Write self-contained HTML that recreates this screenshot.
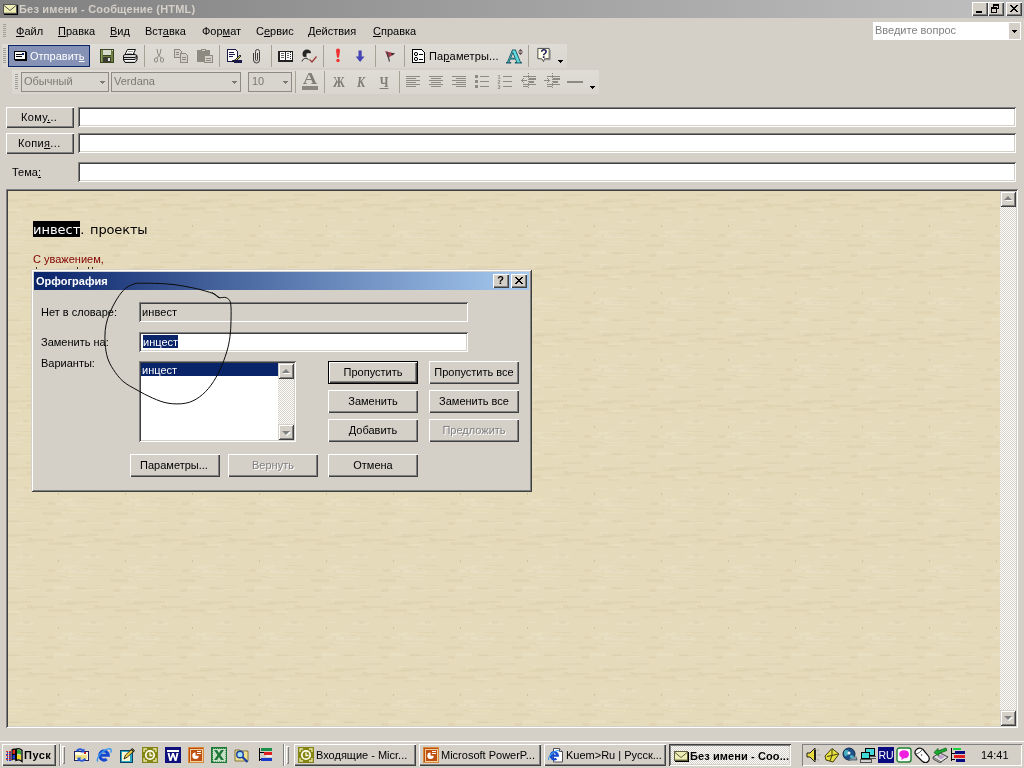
<!DOCTYPE html>
<html lang="ru">
<head>
<meta charset="utf-8">
<title>Без имени - Сообщение (HTML)</title>
<style>
*{box-sizing:border-box;margin:0;padding:0}
html,body{width:1024px;height:768px;overflow:hidden;background:#d4d0c8}
body{position:relative;will-change:transform;font-family:"Liberation Sans","DejaVu Sans",sans-serif;font-size:11px;line-height:13px;color:#000;cursor:default}
.a{position:absolute}
.t{position:absolute;white-space:pre;line-height:13px;height:13px}
u{text-decoration:underline;text-underline-offset:1px}
/* 3D borders */
.btn{position:absolute;background:#d4d0c8;box-shadow:inset 1px 1px 0 #fff,inset -1px -1px 0 #404040,inset -2px -2px 0 #808080;text-align:center;white-space:pre}
.btn.def{box-shadow:inset 0 0 0 1px #000,inset 2px 2px 0 #fff,inset -2px -2px 0 #404040,inset -3px -3px 0 #808080}
.btn.dis{color:#808080;text-shadow:1px 1px 0 #fff}
.sunk{position:absolute;background:#fff;box-shadow:inset 1px 1px 0 #808080,inset -1px -1px 0 #fff,inset 2px 2px 0 #404040,inset -2px -2px 0 #d4d0c8}
.sunk1{position:absolute;box-shadow:inset 1px 1px 0 #808080,inset -1px -1px 0 #fff}
/* title bar */
#title{left:0;top:0;width:1024px;height:18px;background:linear-gradient(90deg,#808080 0%,#c0c0c0 100%)}
#title .cap{left:19px;top:3px;color:#d4d0c8;font-weight:bold;letter-spacing:.2px}
.cb{position:absolute;top:2px;width:16px;height:14px;background:#d4d0c8;box-shadow:inset 1px 1px 0 #fff,inset -1px -1px 0 #404040,inset -2px -2px 0 #808080}
/* menu */
#menu{left:0;top:18px;width:1024px;height:25px}
#menu .t{top:7px}
.grip{position:absolute;width:3px;background:repeating-linear-gradient(180deg,#a0a098 0,#a0a098 1px,transparent 1px,transparent 2px)}
/* toolbars */
.tbbg{position:absolute;background:linear-gradient(180deg,#dfdcd6,#d9d6cf)}
.sep{position:absolute;width:1px;background:#a6a296}
.ic{position:absolute;width:16px;height:16px}
.combo{position:absolute;height:20px;border:1px solid #8f8b83;background:#d8d5ce;color:#7c7972}
.combo .t{top:2px;left:2px}
.arr{position:absolute;width:0;height:0;border-left:3px solid transparent;border-right:3px solid transparent;border-top:3px solid #000}
/* editor */
#editor{left:6px;top:189px;width:1012px;height:539px;background:#e5dab9;box-shadow:inset 1px 1px 0 #808080,inset -1px -1px 0 #fff,inset 2px 2px 0 #404040,inset -2px -2px 0 #d4d0c8}
.sbtrack{position:absolute;background:#fff;background-image:conic-gradient(#d4d0c8 25%,#fff 0 50%,#d4d0c8 0 75%,#fff 0);background-size:2px 2px}
.sbbtn{position:absolute;width:16px;height:16px;background:#d4d0c8;box-shadow:inset 1px 1px 0 #d4d0c8,inset -1px -1px 0 #404040,inset 2px 2px 0 #fff,inset -2px -2px 0 #808080}
/* dialog */
#dlg{left:31px;top:269px;width:501px;height:223px;background:#d4d0c8;box-shadow:inset 1px 1px 0 #d4d0c8,inset -1px -1px 0 #404040,inset 2px 2px 0 #fff,inset -2px -2px 0 #808080}
#dlg .tb{left:3px;top:3px;width:495px;height:18px;background:linear-gradient(90deg,#0a246a 0%,#a6caf0 100%)}
#dlg .tb .cap{left:2px;top:3px;color:#fff;font-weight:bold}
/* taskbar */
#task{left:0;top:740px;width:1024px;height:28px;background:#d4d0c8;box-shadow:inset 0 1px 0 #d4d0c8,inset 0 2px 0 #fff}
.tbtn{position:absolute;top:4px;height:22px;width:122px;background:#d4d0c8;box-shadow:inset 1px 1px 0 #fff,inset -1px -1px 0 #404040,inset -2px -2px 0 #808080}
.tbtn .t{top:5px;left:22px}
.tbtn.on{background:#fff;background-image:conic-gradient(#d4d0c8 25%,#fff 0 50%,#d4d0c8 0 75%,#fff 0);background-size:2px 2px;box-shadow:inset 1px 1px 0 #404040,inset -1px -1px 0 #fff,inset 2px 2px 0 #808080,inset -2px -2px 0 #d4d0c8;font-weight:bold}
.vsep{position:absolute;width:2px;box-shadow:inset 1px 0 0 #808080,inset -1px 0 0 #fff}
.vgrip{position:absolute;width:3px;box-shadow:inset 1px 1px 0 #fff,inset -1px -1px 0 #808080}
.arr.up{border-top:0;border-bottom:3px solid #000}
.arr.dis{border-top-color:#808080;filter:drop-shadow(1px 1px 0 #fff)}
.arr.up.dis{border-bottom-color:#808080}
.sbbtn .arr{border-left-width:4px;border-right-width:4px;border-top-width:4px}
.sbbtn .arr.up{border-top-width:0;border-bottom-width:4px}

</style>
</head>
<body>
<!-- TITLE BAR -->
<div id="title" class="a">
  <svg class="a" style="left:2px;top:2px" width="16" height="14" viewBox="0 0 16 14" shape-rendering="crispEdges">
    <rect x="2" y="3" width="14" height="10" fill="#000"/>
    <rect x="1" y="2" width="14" height="10" fill="#555"/>
    <rect x="2" y="3" width="12" height="8" fill="#eeeeb4"/>
    <path d="M2 3.500l6 5 6-5" fill="none" stroke="#555" stroke-width="1" shape-rendering="auto"/>
    <rect x="2" y="10" width="12" height="1" fill="#c8c890"/>
  </svg>
  <div class="t cap">Без имени - Сообщение (HTML)</div>
  <div class="cb" style="left:972px"><div class="a" style="left:4px;top:9px;width:6px;height:2px;background:#000"></div></div>
  <div class="cb" style="left:988px">
    <div class="a" style="left:5px;top:2px;width:6px;height:5px;border:1px solid #000;border-top-width:2px"></div>
    <div class="a" style="left:3px;top:5px;width:6px;height:6px;border:1px solid #000;border-top-width:2px;background:#d4d0c8"></div>
  </div>
  <div class="cb" style="left:1006px">
    <svg class="a" style="left:4px;top:3px" width="8" height="7" viewBox="0 0 8 7" shape-rendering="crispEdges"><path d="M0 0h2v1h1v1h2v-1h1v-1h2v1h-1v1h-1v1h-1v1h1v1h1v1h1v1h-2v-1h-1v-1h-2v1h-1v1h-2v-1h1v-1h1v-1h1v-1h-1v-1h-1v-1h-1z" fill="#000"/></svg>
  </div>
</div>

<!-- MENU BAR -->
<div id="menu" class="a">
  <div class="grip" style="left:3px;top:6px;height:14px"></div>
  <div class="t" style="left:16px"><u>Ф</u>айл</div>
  <div class="t" style="left:58px"><u>П</u>равка</div>
  <div class="t" style="left:110px"><u>В</u>ид</div>
  <div class="t" style="left:145px">Вст<u>а</u>вка</div>
  <div class="t" style="left:202px">Фор<u>м</u>ат</div>
  <div class="t" style="left:256px">С<u>е</u>рвис</div>
  <div class="t" style="left:308px"><u>Д</u>ействия</div>
  <div class="t" style="left:373px"><u>С</u>правка</div>
  <div class="a" style="left:873px;top:4px;width:148px;height:18px;background:#fff">
    <div class="t" style="left:2px;top:2px;color:#808080">Введите вопрос</div>
    <div class="a" style="right:1px;top:1px;width:11px;height:16px;background:#d4d0c8"></div>
    <svg class="a" style="left:139px;top:8px" width="5" height="3" viewBox="0 0 5 3" shape-rendering="crispEdges"><path d="M0 0h5v1h-1v1h-1v1h-1v-1h-1v-1h-1z" fill="#000"/></svg>
  </div>
</div>

<!-- TOOLBAR 1 -->
<div id="tb1" class="a" style="left:0;top:44px;width:1024px;height:24px">
  <div class="tbbg" style="left:2px;top:0;width:565px;height:24px"></div>
  <div class="grip" style="left:3px;top:4px;height:15px"></div>
  <div class="a" style="left:8px;top:1px;width:82px;height:22px;background:#8592b5;border:1px solid #0a246a">
    <svg class="a" style="left:5px;top:5px" width="13" height="10" viewBox="0 0 13 10" shape-rendering="crispEdges">
      <rect x="1" y="1" width="12" height="9" fill="#000"/>
      <rect x="0" y="0" width="12" height="9" fill="#000"/>
      <rect x="1" y="1" width="10" height="7" fill="#fff"/>
      <rect x="2" y="3" width="6" height="1" fill="#000"/>
      <rect x="2" y="5" width="6" height="1" fill="#000"/>
      <rect x="8" y="2" width="2" height="2" fill="#0a246a"/>
    </svg>
    <div class="t" style="left:21px;top:4px;color:#fff">Отправит<u>ь</u></div>
  </div>
  <!-- save -->
  <svg class="ic" style="left:99px;top:4px" viewBox="0 0 16 16" shape-rendering="crispEdges">
    <rect x="1" y="1" width="14" height="14" fill="#3a4420"/>
    <rect x="2" y="2" width="12" height="12" fill="#6e7f42"/>
    <rect x="2" y="2" width="1" height="12" fill="#8c9c5c"/>
    <rect x="4" y="1" width="8" height="7" fill="#3a4420"/>
    <rect x="4" y="2" width="8" height="5" fill="#d8dacc"/>
    <rect x="4" y="9" width="8" height="5" fill="#3c3c34"/>
    <rect x="9" y="10" width="2" height="3" fill="#e4e4dc"/>
    <rect x="13" y="2" width="1" height="1" fill="#d8dacc"/>
  </svg>
  <!-- print -->
  <svg class="ic" style="left:122px;top:4px" viewBox="0 0 16 16">
    <path d="M5.500 1.500h8l-2.500 5h-8z" fill="#fff" stroke="#000" stroke-width=".9"/>
    <path d="M6 3.500h5M5 5.500h5" stroke="#888" stroke-width=".8"/>
    <path d="M1.500 7.500l1.500-1h10l2 1v4.500l-2 2.500h-10l-1.500-2.500z" fill="#d4d4d4" stroke="#000" stroke-width=".9"/>
    <path d="M1.500 9.500h11.500l2-1.500M2 11.500h11l2-2" fill="none" stroke="#000" stroke-width=".9"/>
    <path d="M3 12.500h10" stroke="#fff" stroke-width="1"/>
    <rect x="12" y="5" width="1" height="1" fill="#888"/>
  </svg>
  <div class="sep" style="left:144px;top:1px;height:22px"></div>
  <!-- cut (disabled) -->
  <svg class="ic" style="left:151px;top:4px" viewBox="0 0 16 16" fill="none" stroke="#8d8a82" stroke-width="1">
    <path d="M6 1l1 5 3 4M10 1l-1 5-3 4"/>
    <ellipse cx="5" cy="12" rx="1.600" ry="2.200"/>
    <ellipse cx="11" cy="12" rx="1.600" ry="2.200"/>
  </svg>
  <!-- copy (disabled) -->
  <svg class="ic" style="left:173px;top:4px" viewBox="0 0 16 16" shape-rendering="crispEdges" fill="#d4d0c8" stroke="#8d8a82">
    <path d="M1.500 1.500h5l2 2v6h-7z"/>
    <path d="M7.500 5.500h5l2 2v6.500h-7z"/>
    <path d="M3 4.500h3M3 6.500h3M9 9.500h4M9 11.500h4" />
  </svg>
  <!-- paste (disabled) -->
  <svg class="ic" style="left:197px;top:4px" viewBox="0 0 16 16" shape-rendering="crispEdges">
    <rect x="0" y="2" width="13" height="12" fill="#8d8a82"/>
    <rect x="4" y="1" width="5" height="3" fill="#8d8a82"/>
    <rect x="5" y="2" width="3" height="1" fill="#d4d0c8"/>
    <rect x="7.500" y="7.500" width="8" height="7" fill="#d4d0c8" stroke="#8d8a82"/>
    <path d="M9 10.500h5M9 12.500h5" stroke="#8d8a82"/>
  </svg>
  <div class="sep" style="left:219px;top:1px;height:22px"></div>
  <!-- signature -->
  <svg class="ic" style="left:226px;top:4px" viewBox="0 0 16 16">
    <path d="M1.500 1.500h8l2 2v10h-10z" fill="#fff" stroke="#1a1a4a" shape-rendering="crispEdges"/>
    <path d="M3 4.500h5M3 6.500h6M3 8.500h4" stroke="#1a1a4a" shape-rendering="crispEdges"/>
    <path d="M6 13l3-1 5-5 1 1-5 5z" fill="#c8c860" stroke="#000" stroke-width=".8"/>
    <rect x="8" y="12" width="8" height="3" fill="#1a1a4a"/>
  </svg>
  <!-- attach -->
  <svg class="ic" style="left:249px;top:4px" viewBox="0 0 16 16" fill="none" stroke="#3c3c3c" stroke-width="1">
    <path d="M4.500 5v7a3 3 0 0 0 6 0v-8.500a2 2 0 0 0-4 0v8a1 1 0 0 0 2 0v-6.500"/>
  </svg>
  <div class="sep" style="left:271px;top:1px;height:22px"></div>
  <!-- address book -->
  <svg class="ic" style="left:278px;top:4px" viewBox="0 0 16 16" shape-rendering="crispEdges">
    <path d="M0.500 3.500h7v9h-7zM7.500 3.500h7v9h-7z" fill="#fff" stroke="#222"/>
    <rect x="0" y="13" width="15" height="1" fill="#222"/>
    <rect x="1" y="3" width="1" height="9" fill="#222"/>
    <path d="M3 5.500h3M3 7.500h3M3 9.500h3M9 5.500h2M9 7.500h2M9 9.500h2" stroke="#666"/>
    <path d="M12.500 4v8" stroke="#222" stroke-dasharray="1 1"/>
  </svg>
  <!-- check names -->
  <svg class="ic" style="left:301px;top:4px" viewBox="0 0 16 16">
    <path d="M1.500 6c0-3 2-4.500 4.500-4.500s4 1.500 4 3.500l-1.500.5v2l-2 1-3.500.5c-1-.5-1.500-1.500-1.500-3z" fill="#262626"/>
    <path d="M5.500 5.500l3-.5.800 2-.8 2.500-2 .5-1-2z" fill="#e8e4dc"/>
    <path d="M1 13.500c.5-2 2-3 4-3.500l2.500 1.500" fill="none" stroke="#262626" stroke-width="1"/>
    <path d="M8.500 11.500l2.500 2.500 4.500-5.500" fill="none" stroke="#9c3c3c" stroke-width="1.300"/>
  </svg>
  <div class="sep" style="left:323px;top:1px;height:22px"></div>
  <!-- importance high -->
  <svg class="ic" style="left:330px;top:4px" viewBox="0 0 16 16">
    <path d="M6 2.500a2 2 0 0 1 4 0l-1 7h-2z" fill="#f03030"/>
    <circle cx="8" cy="12.500" r="1.700" fill="#f03030"/>
  </svg>
  <!-- importance low -->
  <svg class="ic" style="left:352px;top:4px" viewBox="0 0 16 16">
    <path d="M6.500 2.500h3.200v6h2.800l-4.400 5.500-4.400-5.500h2.800z" fill="#4444b4"/>
  </svg>
  <div class="sep" style="left:375px;top:1px;height:22px"></div>
  <!-- flag -->
  <svg class="ic" style="left:382px;top:4px" viewBox="0 0 16 16">
    <path d="M3 3l10 2.500-7 4.500z" fill="#a83c50"/>
    <path d="M5 4l2.500 9.500" stroke="#444" stroke-width="1.200" fill="none"/>
    <path d="M9 5l4 .5-3 2z" fill="#303030"/>
  </svg>
  <div class="sep" style="left:404px;top:1px;height:22px"></div>
  <!-- options -->
  <svg class="ic" style="left:411px;top:4px" viewBox="0 0 16 16">
    <path d="M1.500 1.500h9l3 3v10h-12z" fill="#fff" stroke="#000" shape-rendering="crispEdges"/>
    <circle cx="5" cy="6" r="1.600" fill="#fff" stroke="#000"/>
    <circle cx="5" cy="11" r="1.600" fill="#fff" stroke="#000"/>
    <path d="M8 6.500h4M8 11.500h4" stroke="#000" shape-rendering="crispEdges"/>
  </svg>
  <div class="t" style="left:429px;top:6px;letter-spacing:.15px">Па<u>р</u>аметры...</div>
  <!-- font A -->
  <div class="a" style="left:505px;top:4px;width:18px;height:18px;font-family:'Liberation Serif','DejaVu Serif',serif;font-weight:bold;font-size:19px;line-height:18px;color:#60dcdc;-webkit-text-stroke:.8px #1c5c6c;text-align:center;transform:scaleX(1.12)">A</div>
  <svg class="a" style="left:518px;top:5px" width="5" height="6" viewBox="0 0 5 6"><path d="M2.500 0l2.500 2.500h-5zM2.500 6l2.500-2.500h-5z" fill="#5c4848"/></svg>
  <div class="sep" style="left:528px;top:1px;height:22px"></div>
  <!-- help -->
  <svg class="ic" style="left:536px;top:3px" viewBox="0 0 16 17">
    <path d="M1.500 1.500h12v11h-5l-1 3-2-3h-4z" fill="#ffffe8" stroke="#444"/>
    <path d="M14.500 3v10.500h-5" stroke="#888" fill="none"/>
  </svg>
  <div class="t" style="left:540px;top:4px;font-weight:bold;font-size:12px;color:#202060;width:8px;text-align:center">?</div>
  <svg class="a" style="left:558px;top:16px" width="5" height="3" viewBox="0 0 5 3" shape-rendering="crispEdges"><path d="M0 0h5v1h-1v1h-1v1h-1v-1h-1v-1h-1z" fill="#000"/></svg>
</div>

<!-- TOOLBAR 2 -->
<div id="tb2" class="a" style="left:0;top:70px;width:1024px;height:24px">
  <div class="tbbg" style="left:12px;top:0;width:587px;height:24px"></div>
  <div class="grip" style="left:15px;top:4px;height:15px"></div>
  <div class="combo" style="left:21px;top:2px;width:88px"><div class="t">Обычный</div><svg class="a" style="left:78px;top:8px" width="5" height="3" viewBox="0 0 5 3" shape-rendering="crispEdges"><path d="M0 0h5v1h-1v1h-1v1h-1v-1h-1v-1h-1z" fill="#7c7972"/></svg></div>
  <div class="combo" style="left:111px;top:2px;width:130px"><div class="t">Verdana</div><svg class="a" style="left:120px;top:8px" width="5" height="3" viewBox="0 0 5 3" shape-rendering="crispEdges"><path d="M0 0h5v1h-1v1h-1v1h-1v-1h-1v-1h-1z" fill="#7c7972"/></svg></div>
  <div class="combo" style="left:248px;top:2px;width:44px"><div class="t" style="left:3px">10</div><svg class="a" style="left:34px;top:8px" width="5" height="3" viewBox="0 0 5 3" shape-rendering="crispEdges"><path d="M0 0h5v1h-1v1h-1v1h-1v-1h-1v-1h-1z" fill="#7c7972"/></svg></div>
  <div class="sep" style="left:295px;top:1px;height:22px"></div>
  <!-- font color -->
  <div class="a dA" style="left:301px;top:1px;width:18px;height:16px;font-family:'Liberation Serif','DejaVu Serif',serif;font-weight:bold;font-size:16px;line-height:16px;color:#807d76;text-align:center;transform:scaleX(1.25)">A</div>
  <div class="a" style="left:302px;top:16px;width:16px;height:4px;background:#8a877f"></div>
  <div class="sep" style="left:324px;top:1px;height:22px"></div>
  <div class="a dB" style="left:331px;top:5px;transform:scaleX(.85);width:16px;height:16px;font-family:'Liberation Serif','DejaVu Serif',serif;font-weight:bold;font-size:14px;line-height:16px;color:#807d76;text-align:center">Ж</div>
  <div class="a dB" style="left:353px;top:5px;transform:scaleX(.85);width:16px;height:16px;font-family:'Liberation Serif','DejaVu Serif',serif;font-weight:bold;font-style:italic;font-size:14px;line-height:16px;color:#807d76;text-align:center">К</div>
  <div class="a dB" style="left:376px;top:5px;transform:scaleX(.85);width:16px;height:16px;font-family:'Liberation Serif','DejaVu Serif',serif;font-weight:bold;font-size:14px;line-height:16px;color:#807d76;text-align:center;text-decoration:underline">Ч</div>
  <div class="sep" style="left:399px;top:1px;height:22px"></div>
  <!-- align left / center / right -->
  <svg class="ic" style="left:405px;top:3px" viewBox="0 0 16 16" shape-rendering="crispEdges" stroke="#8d8a82"><path d="M1 3.500h14M1 5.500h10M1 7.500h14M1 9.500h10M1 11.500h14M1 13.500h10"/></svg>
  <svg class="ic" style="left:428px;top:3px" viewBox="0 0 16 16" shape-rendering="crispEdges" stroke="#8d8a82"><path d="M1 3.500h14M3 5.500h10M1 7.500h14M3 9.500h10M1 11.500h14M3 13.500h10"/></svg>
  <svg class="ic" style="left:451px;top:3px" viewBox="0 0 16 16" shape-rendering="crispEdges" stroke="#8d8a82"><path d="M1 3.500h14M5 5.500h10M1 7.500h14M5 9.500h10M1 11.500h14M5 13.500h10"/></svg>
  <!-- bullets -->
  <svg class="ic" style="left:474px;top:3px" viewBox="0 0 16 16" shape-rendering="crispEdges" stroke="#8d8a82"><path d="M6 3.500h9M6 8.500h9M6 13.500h9"/><path d="M1 2v3h3v-3zM1 7v3h3v-3zM1 12v3h3v-3z" fill="#8d8a82" stroke="none"/></svg>
  <!-- numbering -->
  <svg class="ic" style="left:497px;top:3px" viewBox="0 0 16 16" stroke="#8d8a82"><path d="M6 3.500h9M6 8.500h9M6 13.500h9" shape-rendering="crispEdges"/><text x="0.500" y="5.500" font-family="Liberation Sans, DejaVu Sans, sans-serif" font-size="5.500" font-weight="bold" fill="#8d8a82" stroke="none">1</text><text x="0.500" y="10.500" font-family="Liberation Sans, DejaVu Sans, sans-serif" font-size="5.500" font-weight="bold" fill="#8d8a82" stroke="none">2</text><text x="0.500" y="15.500" font-family="Liberation Sans, DejaVu Sans, sans-serif" font-size="5.500" font-weight="bold" fill="#8d8a82" stroke="none">3</text></svg>
  <!-- outdent / indent -->
  <svg class="ic" style="left:520px;top:3px" viewBox="0 0 16 16" shape-rendering="crispEdges" stroke="#8d8a82"><path d="M3 3.500h13M3 11.500h13M3 13.500h5"/><path d="M9 6h7M9 9h5" stroke-width="2"/><path d="M8.500 0v16" stroke-dasharray="1 1"/><path d="M1 7.500h6M2 6.500h1M2 8.500h1M3 5.500h1M3 9.500h1"/></svg>
  <svg class="ic" style="left:544px;top:3px" viewBox="0 0 16 16" shape-rendering="crispEdges" stroke="#8d8a82"><path d="M3 3.500h13M3 11.500h13M3 13.500h5"/><path d="M9 6h7M9 9h5" stroke-width="2"/><path d="M8.500 0v16" stroke-dasharray="1 1"/><path d="M0 7.500h6M4 6.500h1M4 8.500h1M3 5.500h1M3 9.500h1"/></svg>
  <!-- hr -->
  <div class="a" style="left:567px;top:11px;width:16px;height:2px;background:#8d8a82"></div>
  <svg class="a" style="left:590px;top:16px" width="5" height="3" viewBox="0 0 5 3" shape-rendering="crispEdges"><path d="M0 0h5v1h-1v1h-1v1h-1v-1h-1v-1h-1z" fill="#000"/></svg>
</div>

<!-- ADDRESS FIELDS -->
<div id="fields" class="a" style="left:0;top:96px;width:1024px;height:92px">
  <div class="btn" style="left:6px;top:11px;width:68px;height:21px;line-height:21px;letter-spacing:.35px;text-align:left;padding-left:15px">Кому<u>.</u>..</div>
  <div class="sunk" style="left:78px;top:11px;width:938px;height:20px"></div>
  <div class="btn" style="left:6px;top:37px;width:68px;height:21px;line-height:21px;letter-spacing:.35px;text-align:left;padding-left:12px">Копи<u>я</u>...</div>
  <div class="sunk" style="left:78px;top:37px;width:938px;height:20px"></div>
  <div class="t" style="left:12px;top:70px">Тема<u>:</u></div>
  <div class="sunk" style="left:78px;top:66px;width:938px;height:20px"></div>
</div>

<!-- MESSAGE BODY -->
<div id="editor" class="a">
  <svg class="a" style="left:2px;top:2px" width="992" height="535"><defs><pattern id="paper" width="67" height="67" patternUnits="userSpaceOnUse"><rect width="67" height="67" fill="#e5dab9"/><rect x="50" y="6" width="15" height="1" fill="#fff" fill-opacity="0.13"/><rect x="7" y="64" width="8" height="2" fill="#fff" fill-opacity="0.07"/><rect x="8" y="30" width="18" height="2" fill="#fff" fill-opacity="0.10"/><rect x="15" y="28" width="6" height="3" fill="#8c7a46" fill-opacity="0.06"/><rect x="50" y="6" width="6" height="3" fill="#8c7a46" fill-opacity="0.03"/><rect x="37" y="53" width="22" height="1" fill="#fff" fill-opacity="0.07"/><rect x="23" y="13" width="23" height="2" fill="#8c7a46" fill-opacity="0.06"/><rect x="12" y="8" width="11" height="2" fill="#8c7a46" fill-opacity="0.06"/><rect x="54" y="40" width="11" height="2" fill="#fff" fill-opacity="0.10"/><rect x="31" y="23" width="16" height="2" fill="#8c7a46" fill-opacity="0.03"/><rect x="38" y="63" width="7" height="3" fill="#8c7a46" fill-opacity="0.06"/><rect x="9" y="15" width="19" height="2" fill="#8c7a46" fill-opacity="0.03"/><rect x="62" y="53" width="15" height="1" fill="#fff" fill-opacity="0.13"/><rect x="-5" y="53" width="15" height="1" fill="#fff" fill-opacity="0.13"/><rect x="40" y="43" width="7" height="3" fill="#8c7a46" fill-opacity="0.06"/><rect x="58" y="8" width="20" height="3" fill="#8c7a46" fill-opacity="0.05"/><rect x="-9" y="8" width="20" height="3" fill="#8c7a46" fill-opacity="0.05"/><rect x="7" y="39" width="20" height="1" fill="#8c7a46" fill-opacity="0.06"/><rect x="49" y="44" width="19" height="2" fill="#fff" fill-opacity="0.10"/><rect x="-18" y="44" width="19" height="2" fill="#fff" fill-opacity="0.10"/><rect x="14" y="63" width="16" height="1" fill="#fff" fill-opacity="0.10"/><rect x="50" y="50" width="9" height="1" fill="#8c7a46" fill-opacity="0.05"/><rect x="57" y="51" width="7" height="1" fill="#8c7a46" fill-opacity="0.03"/><rect x="35" y="53" width="18" height="3" fill="#8c7a46" fill-opacity="0.06"/><rect x="19" y="10" width="17" height="1" fill="#fff" fill-opacity="0.07"/><rect x="1" y="62" width="26" height="1" fill="#8c7a46" fill-opacity="0.03"/><rect x="0" y="18" width="13" height="2" fill="#fff" fill-opacity="0.10"/><rect x="40" y="16" width="24" height="3" fill="#8c7a46" fill-opacity="0.06"/><rect x="58" y="50" width="24" height="1" fill="#fff" fill-opacity="0.10"/><rect x="-9" y="50" width="24" height="1" fill="#fff" fill-opacity="0.10"/><rect x="51" y="7" width="8" height="2" fill="#fff" fill-opacity="0.07"/><rect x="14" y="43" width="19" height="1" fill="#8c7a46" fill-opacity="0.03"/><rect x="19" y="12" width="5" height="3" fill="#8c7a46" fill-opacity="0.06"/><rect x="26" y="48" width="5" height="1" fill="#fff" fill-opacity="0.10"/><rect x="46" y="60" width="16" height="3" fill="#fff" fill-opacity="0.10"/><rect x="61" y="39" width="19" height="2" fill="#fff" fill-opacity="0.07"/><rect x="-6" y="39" width="19" height="2" fill="#fff" fill-opacity="0.07"/><rect x="61" y="20" width="15" height="2" fill="#8c7a46" fill-opacity="0.03"/><rect x="-6" y="20" width="15" height="2" fill="#8c7a46" fill-opacity="0.03"/><rect x="18" y="3" width="21" height="2" fill="#8c7a46" fill-opacity="0.05"/><rect x="33" y="66" width="25" height="1" fill="#fff" fill-opacity="0.07"/><rect x="64" y="42" width="16" height="1" fill="#8c7a46" fill-opacity="0.06"/><rect x="-3" y="42" width="16" height="1" fill="#8c7a46" fill-opacity="0.06"/><rect x="51" y="29" width="11" height="1" fill="#fff" fill-opacity="0.10"/><rect x="3" y="35" width="16" height="1" fill="#fff" fill-opacity="0.07"/><rect x="57" y="44" width="24" height="2" fill="#8c7a46" fill-opacity="0.05"/><rect x="-10" y="44" width="24" height="2" fill="#8c7a46" fill-opacity="0.05"/><rect x="13" y="29" width="7" height="1" fill="#fff" fill-opacity="0.10"/><rect x="0" y="61" width="11" height="2" fill="#8c7a46" fill-opacity="0.05"/><rect x="15" y="49" width="25" height="1" fill="#8c7a46" fill-opacity="0.03"/><rect x="55" y="42" width="20" height="1" fill="#fff" fill-opacity="0.13"/><rect x="-12" y="42" width="20" height="1" fill="#fff" fill-opacity="0.13"/><rect x="51" y="10" width="17" height="2" fill="#8c7a46" fill-opacity="0.03"/><rect x="-16" y="10" width="17" height="2" fill="#8c7a46" fill-opacity="0.03"/><rect x="19" y="59" width="9" height="1" fill="#8c7a46" fill-opacity="0.03"/><rect x="60" y="44" width="24" height="3" fill="#fff" fill-opacity="0.13"/><rect x="-7" y="44" width="24" height="3" fill="#fff" fill-opacity="0.13"/><rect x="50" y="34" width="1" height="2" fill="#cdc29f"/></pattern></defs><rect width="992" height="535" fill="url(#paper)"/></svg>
  <div class="a" style="left:27px;top:32px;width:47px;height:16px;background:#000"></div>
  <div class="a" style="left:27px;top:33px;height:16px;line-height:16px;font-family:'DejaVu Sans','Liberation Sans',sans-serif;font-size:13px;white-space:pre"><span style="color:#fff">инвест</span>. <span style="margin-left:1.5px;letter-spacing:-.15px">проекты</span></div>
  <div class="t" style="left:27px;top:64px;color:#800000">С уважением,</div>
  <div class="a" style="left:30px;top:78px;width:1px;height:2px;background:#3a3020"></div><div class="a" style="left:71px;top:78px;width:1px;height:2px;background:#3a3020"></div><div class="a" style="left:82px;top:78px;width:1px;height:2px;background:#3a3020"></div><div class="a" style="left:86px;top:78px;width:1px;height:2px;background:#3a3020"></div>
  <div class="sbtrack" style="left:994px;top:2px;width:16px;height:535px"></div>
  <div class="sbbtn" style="left:994px;top:2px"><div class="arr up dis" style="left:4px;top:5px"></div></div>
  <div class="sbbtn" style="left:994px;top:521px"><div class="arr dis" style="left:4px;top:6px"></div></div>
</div>

<!-- SPELLING DIALOG -->
<div id="dlg" class="a">
  <div class="a tb">
    <div class="t cap">Орфография</div>
    <div class="cb" style="left:459px;width:16px;height:14px"><div class="t" style="left:0;top:0;width:15px;text-align:center;font-weight:bold;font-size:11px">?</div></div>
    <div class="cb" style="left:477px;width:16px;height:14px">
      <svg class="a" style="left:4px;top:3px" width="8" height="7" viewBox="0 0 8 7" shape-rendering="crispEdges"><path d="M0 0h2v1h1v1h2v-1h1v-1h2v1h-1v1h-1v1h-1v1h1v1h1v1h1v1h-2v-1h-1v-1h-2v1h-1v1h-2v-1h1v-1h1v-1h1v-1h-1v-1h-1v-1h-1z" fill="#000"/></svg>
    </div>
  </div>
  <div class="t" style="left:10px;top:37px">Нет в словаре:</div>
  <div class="sunk" style="left:108px;top:33px;width:329px;height:20px;background:#d4d0c8"><div class="t" style="left:3px;top:4px;letter-spacing:.1px">инвест</div></div>
  <div class="t" style="left:10px;top:67px">Заменить на:</div>
  <div class="sunk" style="left:108px;top:63px;width:329px;height:20px"><div class="t" style="left:4px;top:3px;color:#fff;background:#0a246a;line-height:14px">инцест</div></div>
  <div class="t" style="left:10px;top:88px">Варианты:</div>
  <div class="sunk" style="left:108px;top:92px;width:157px;height:81px">
    <div class="a" style="left:2px;top:2px;width:137px;height:13px;background:#0a246a"><div class="t" style="left:1px;top:1px;color:#fff">инцест</div></div>
    <div class="sbtrack" style="left:139px;top:2px;width:16px;height:77px"></div>
    <div class="sbbtn" style="left:139px;top:2px"><div class="arr up dis" style="left:4px;top:6px"></div></div>
    <div class="sbbtn" style="left:139px;top:63px"><div class="arr dis" style="left:4px;top:7px"></div></div>
  </div>
  <div class="btn def" style="left:297px;top:92px;width:90px;height:23px;line-height:22px">Пропустить</div>
  <div class="btn" style="left:398px;top:92px;width:90px;height:23px;line-height:22px">Пропустить все</div>
  <div class="btn" style="left:297px;top:121px;width:90px;height:23px;line-height:22px">Заменить</div>
  <div class="btn" style="left:398px;top:121px;width:90px;height:23px;line-height:22px">Заменить все</div>
  <div class="btn" style="left:297px;top:150px;width:90px;height:23px;line-height:22px">Добавить</div>
  <div class="btn dis" style="left:398px;top:150px;width:90px;height:23px;line-height:22px">Предложить</div>
  <div class="btn" style="left:99px;top:185px;width:90px;height:23px;line-height:22px;padding-right:2px">Параметры...</div>
  <div class="btn dis" style="left:197px;top:185px;width:90px;height:23px;line-height:22px">Вернуть</div>
  <div class="btn" style="left:297px;top:185px;width:90px;height:23px;line-height:22px">Отмена</div>
  <!-- hand-drawn annotation -->
  <svg class="a" style="left:0;top:0" width="501" height="223" viewBox="31 269 501 223" fill="none" stroke="#0c0c0c" stroke-width="1">
    <path d="M136.0 283.3C139.1 283.3,148.2 283.1,154.5 283.3C160.8 283.5,167.5 283.8,174.0 284.6C180.5 285.4,188.0 286.9,193.5 288.0C199.0 289.1,203.6 290.5,207.0 291.5C210.4 292.5,212.0 293.0,214.0 294.0C216.0 295.0,217.0 297.0,219.0 297.6C221.0 298.2,224.1 296.7,226.0 297.6C227.9 298.5,229.8 299.3,230.6 303.2C231.4 307.1,231.1 315.3,231.0 320.8C230.9 326.3,230.7 331.2,230.0 336.4C229.3 341.6,228.4 346.5,226.7 352.0C225.0 357.5,222.6 364.1,220.0 369.6C217.4 375.1,214.4 380.6,211.0 385.2C207.6 389.8,203.6 394.0,199.4 397.0C195.2 400.0,190.9 402.2,185.7 403.2C180.5 404.2,173.5 404.1,168.0 403.2C162.5 402.3,157.7 400.2,152.5 398.0C147.3 395.8,141.9 392.8,137.0 390.0C132.1 387.2,126.9 384.7,123.0 381.3C119.1 377.9,116.0 373.5,113.4 369.6C110.8 365.7,109.0 362.2,107.6 358.0C106.2 353.8,105.6 348.8,105.2 344.2C104.8 339.6,104.8 334.7,105.2 330.5C105.6 326.3,106.4 322.7,107.6 318.8C108.8 314.9,110.5 310.9,112.5 307.0C114.5 303.1,116.9 298.7,119.3 295.4C121.7 292.1,124.2 289.2,127.0 287.2C129.8 285.2,134.5 283.9,136.0 283.3"/>
    <path d="M212 292.500C215 294.500,217.500 296,219.500 297.800"/>
  </svg>
</div>

<!-- TASKBAR -->
<div id="task" class="a">
  <div class="btn" style="left:2px;top:4px;width:54px;height:22px;text-align:left"><svg class="a" style="left:4px;top:3px" width="17" height="16" viewBox="0 0 17 16" ><path d="M5.500 2.500c2.200-1.600 4.200-1.200 5.500.200v11c-1.500-1.400-3.500-1.600-5.500 0z" fill="#000"/><path d="M6.500 3.500c1.300-.9 2.300-.8 3 -.3v4c-.8-.5-1.800-.5-3 .1z" fill="#e83020"/><path d="M10.500 3c1.500-.6 3-.4 4.500.8v4c-1.500-1.100-3-1.200-4.500-.6z" fill="#30a838"/><path d="M6.500 8.300c1.200-.7 2.200-.7 3-.2v4c-.8-.5-1.800-.5-3 .1z" fill="#2040d8"/><path d="M10.500 8c1.500-.6 3-.4 4.500.8v4c-1.500-1.100-3-1.200-4.500-.6z" fill="#f0d820"/><path d="M10 2.200c2-1 4-.7 6 1v11.300c-2-1.700-4-2-6-1z" fill="none" stroke="#000" stroke-width="1.300"/><path d="M10 2.500v11" stroke="#000" stroke-width="1.200"/><path d="M0 4h5M1 6h4M0 8h5M1 10h4M0 12h5" stroke="#e03020" stroke-width="1" shape-rendering="crispEdges"/><path d="M1 5h4M0 7h5M1 9h4M0 11h5M1 13h4" stroke="#2040d0" stroke-width="1" shape-rendering="crispEdges"/><path d="M2 4v10" stroke="#d4d0c8" stroke-width="1" shape-rendering="crispEdges"/></svg><div class="t" style="left:22px;top:5px;font-weight:bold;letter-spacing:.5px">Пуск</div></div>
  <div class="vsep" style="left:59px;top:4px;height:22px"></div>
  <div class="vgrip" style="left:62px;top:6px;height:18px"></div>
  <svg class="a" style="left:73px;top:7px" width="16" height="16" viewBox="0 0 16 16" ><rect x="1" y="4" width="14" height="9" fill="#fffce0" stroke="#202060" stroke-width="1" shape-rendering="crispEdges"/><rect x="2" y="8" width="12" height="4" fill="#f0e080" shape-rendering="crispEdges"/><rect x="11" y="5" width="2" height="2" fill="#d02020" shape-rendering="crispEdges"/><path d="M3 4c1-3 5-3.500 7-1.500l1.500-1v4h-4l1.500-1.500c-1.500-1.200-3.500-.8-4 1z" fill="#2858d8"/><path d="M13 12c-1 3-5 3.500-7 1.500l-1.500 1v-4h4l-1.500 1.500c1.500 1.200 3.500.8 4-1z" fill="#2858d8"/></svg>
  <svg class="a" style="left:96px;top:7px" width="16" height="16" viewBox="0 0 16 16" ><path d="M4 8.300h8.300a4.300 4.600 0 1 0-1.600 3.800" fill="none" stroke="#1448d0" stroke-width="3"/><path d="M2 14.500c-2-1.500.500-6.500 5-10 3.500-2.700 7-3.500 8-2 .5.800.2 2-.5 3.200" fill="none" stroke="#3c9cf0" stroke-width="1.400"/></svg>
  <svg class="a" style="left:119px;top:7px" width="16" height="16" viewBox="0 0 16 16" ><rect x="1" y="3" width="12" height="12" fill="#28a8c8" stroke="#104060" shape-rendering="crispEdges"/><rect x="3" y="5" width="8" height="9" fill="#fff8d0" shape-rendering="crispEdges"/><path d="M5 12l1.500-4 7-6.500 2 2-7 6.500z" fill="#f0d040" stroke="#202020" stroke-width=".9"/><path d="M12 2l3 3" stroke="#202020" stroke-width="1.500"/></svg>
  <svg class="a" style="left:142px;top:7px" width="16" height="16" viewBox="0 0 16 16" ><rect x="0" y="0" width="16" height="16" fill="#858514" shape-rendering="crispEdges"/><path d="M2 5v-3h3M11 2h3v3M14 11v3h-3M5 14h-3v-3" fill="none" stroke="#e8e8a8" stroke-width="1.300"/><circle cx="8" cy="8" r="4.200" fill="none" stroke="#fffff0" stroke-width="1.700"/><path d="M8 5.500v3h2.500" fill="none" stroke="#fffff0" stroke-width="1.300"/></svg>
  <svg class="a" style="left:165px;top:7px" width="16" height="16" viewBox="0 0 16 16" ><rect x="0" y="0" width="16" height="16" fill="#10107c" shape-rendering="crispEdges"/><rect x="2" y="3" width="12" height="2" fill="#fff" shape-rendering="crispEdges"/><path d="M2.500 6l2 8h1.800l1.700-5 1.700 5h1.800l2-8h-2l-1 5-1.600-5h-1.800l-1.600 5-1-5z" fill="#fff"/></svg>
  <svg class="a" style="left:188px;top:7px" width="16" height="16" viewBox="0 0 16 16" ><rect x="0" y="0" width="16" height="16" fill="#d88838" shape-rendering="crispEdges"/><rect x="1" y="1" width="14" height="14" fill="#c05010" shape-rendering="crispEdges"/><rect x="2" y="2" width="12" height="12" fill="none" stroke="#f0d0a0" stroke-width="1" shape-rendering="crispEdges"/><path d="M7.500 5.500a3.200 3.200 0 1 0 3.200 3.200h-3.200z" fill="#fff"/><path d="M9 4.500h4M9 6.500h4" stroke="#fff" stroke-width="1" shape-rendering="crispEdges"/></svg>
  <svg class="a" style="left:211px;top:7px" width="16" height="16" viewBox="0 0 16 16" ><rect x="0" y="0" width="16" height="16" fill="#207838" shape-rendering="crispEdges"/><rect x="1.500" y="1.500" width="13" height="13" fill="#c8e0c8" stroke="#60a870" stroke-width="1" stroke-dasharray="1 1" shape-rendering="crispEdges"/><path d="M3 3h3l2 3 2-3h3l-3.500 5 3.500 5h-3l-2-3-2 3h-3l3.500-5z" fill="#207838"/></svg>
  <svg class="a" style="left:234px;top:7px" width="16" height="16" viewBox="0 0 16 16" ><path d="M1 3h5l1 1h7v10h-13z" fill="#f0e090" stroke="#706020" stroke-width=".8"/><circle cx="6" cy="7.500" r="3.300" fill="#a8e0f0" stroke="#1840a0" stroke-width="1.400"/><path d="M8.500 10l5 5" stroke="#1840a0" stroke-width="2.200"/></svg>
  <svg class="a" style="left:257px;top:7px" width="16" height="16" viewBox="0 0 16 16" ><path d="M2.500 1v13M2.500 5.500h4M2.500 12.500h3" fill="none" stroke="#000" stroke-width="1.200" shape-rendering="crispEdges"/><rect x="4" y="1" width="11" height="3" fill="#189048" shape-rendering="crispEdges"/><rect x="7" y="5" width="8" height="3" fill="#e02020" shape-rendering="crispEdges"/><rect x="9" y="8" width="6" height="2" fill="#f0f0f0" shape-rendering="crispEdges"/><rect x="4" y="11" width="11" height="3" fill="#1838c8" shape-rendering="crispEdges"/></svg>
  <div class="vsep" style="left:283px;top:4px;height:22px"></div>
  <div class="vgrip" style="left:286px;top:6px;height:18px"></div>
  <div class="tbtn" style="left:294px"><svg class="a" style="left:4px;top:3px" width="16" height="16" viewBox="0 0 16 16" ><rect x="0" y="0" width="16" height="16" fill="#858514" shape-rendering="crispEdges"/><path d="M2 5v-3h3M11 2h3v3M14 11v3h-3M5 14h-3v-3" fill="none" stroke="#e8e8a8" stroke-width="1.300"/><circle cx="8" cy="8" r="4.200" fill="none" stroke="#fffff0" stroke-width="1.700"/><path d="M8 5.500v3h2.500" fill="none" stroke="#fffff0" stroke-width="1.300"/></svg><div class="t" style="left:22px;top:5px">Входящие - Micr...</div></div>
  <div class="tbtn" style="left:419px"><svg class="a" style="left:4px;top:3px" width="16" height="16" viewBox="0 0 16 16" ><rect x="0" y="0" width="16" height="16" fill="#d88838" shape-rendering="crispEdges"/><rect x="1" y="1" width="14" height="14" fill="#c05010" shape-rendering="crispEdges"/><rect x="2" y="2" width="12" height="12" fill="none" stroke="#f0d0a0" stroke-width="1" shape-rendering="crispEdges"/><path d="M7.500 5.500a3.200 3.200 0 1 0 3.200 3.200h-3.200z" fill="#fff"/><path d="M9 4.500h4M9 6.500h4" stroke="#fff" stroke-width="1" shape-rendering="crispEdges"/></svg><div class="t" style="left:22px;top:5px">Microsoft PowerP...</div></div>
  <div class="tbtn" style="left:544px"><svg class="a" style="left:4px;top:3px" width="16" height="16" viewBox="0 0 16 16" ><path d="M5.500 1.500h6l3 3v10.500h-9z" fill="#fff" stroke="#505050" stroke-width="1"/><path d="M11.500 1.500v3h3" fill="#d8d8d8" stroke="#505050" stroke-width="1"/><path d="M3.200 8.600h6.500a3.400 3.600 0 1 0-1.300 3" fill="none" stroke="#1448d0" stroke-width="2.400"/><path d="M.8 13c-1-1.500 1-5 4.500-7.500 2.500-1.800 5-2.300 5.800-1.300" fill="none" stroke="#3c9cf0" stroke-width="1.100"/></svg><div class="t" style="left:22px;top:5px">Kuem&gt;Ru | Русск...</div></div>
  <div class="tbtn on" style="left:669px"><svg class="a" style="left:5px;top:5px" width="16" height="16" viewBox="0 0 16 16" ><rect x="1" y="3" width="14" height="10" fill="#000" shape-rendering="crispEdges"/><rect x="0" y="2" width="14" height="10" fill="#606040" shape-rendering="crispEdges"/><rect x="1" y="3" width="12" height="8" fill="#eeeeb4" shape-rendering="crispEdges"/><path d="M1 3.500l6 5 6-5" fill="none" stroke="#606040" stroke-width="1"/><rect x="1" y="10" width="12" height="1" fill="#b8b880" shape-rendering="crispEdges"/></svg><div class="t" style="left:21px;top:6px;letter-spacing:.1px">Без имени - Соо...</div></div>
  <div class="sunk1" style="left:802px;top:4px;width:220px;height:22px"></div>
  <svg class="a" style="left:806px;top:7px" width="16" height="16" viewBox="0 0 16 16" ><path d="M1 6h3l5-5v14l-5-5h-3z" fill="#e8d840" stroke="#202020" stroke-width="1"/><path d="M9 3v10" stroke="#000" stroke-width="1.500"/><path d="M11 4l2-1.500M11.500 8h3M11 12l2 1.500" stroke="#a0a0a0" stroke-width="1"/></svg>
  <svg class="a" style="left:824px;top:7px" width="16" height="16" viewBox="0 0 16 16" ><path d="M1 9l7-7.500 7 5.500-6 8-7-2z" fill="#e8e040" stroke="#404010" stroke-width="1"/><path d="M8 2v6.500M3 9.500l5-1 6-1.500M6 14l2-5.500" fill="none" stroke="#404010" stroke-width="1"/></svg>
  <svg class="a" style="left:842px;top:7px" width="16" height="16" viewBox="0 0 16 16" ><circle cx="7" cy="7" r="6" fill="#205088" stroke="#102848" stroke-width="1"/><path d="M4 3c2 0 3 1 3 3s-2 2-3 3-2-1-2-3 1-3 2-3zM9 8c2 0 3 1 3 2s-1 2-2 2-2-1-2-2 0-2 1-2z" fill="#48b0c0"/><path d="M6 13h9l-1-3.500" fill="#8898a8" stroke="#405060" stroke-width=".8"/><circle cx="7" cy="6" r="1.500" fill="#e8f0f8"/></svg>
  <svg class="a" style="left:860px;top:7px" width="16" height="16" viewBox="0 0 16 16" ><rect x="5.500" y="1.500" width="9" height="7" fill="#40d8d8" stroke="#000" stroke-width="1" shape-rendering="crispEdges"/><rect x="4" y="9" width="12" height="2" fill="#d0d0d0" stroke="#000" stroke-width=".6" shape-rendering="crispEdges"/><rect x="1.500" y="5.500" width="8" height="6" fill="#40d8d8" stroke="#000" stroke-width="1" shape-rendering="crispEdges"/><rect x="0" y="12" width="11" height="3" fill="#d0d0d0" stroke="#000" stroke-width=".6" shape-rendering="crispEdges"/></svg>
  <svg class="a" style="left:878px;top:7px" width="16" height="16" viewBox="0 0 16 16" ><rect x="0" y="0" width="16" height="16" fill="#0a0a80" shape-rendering="crispEdges"/><text x="8" y="12" text-anchor="middle" font-family="Liberation Sans, DejaVu Sans, sans-serif" font-size="10.500" fill="#fff">RU</text></svg>
  <svg class="a" style="left:896px;top:7px" width="16" height="16" viewBox="0 0 16 16" ><rect x="1" y="1" width="14" height="14" rx="2.500" fill="#fff" stroke="#208030" stroke-width="1.400"/><path d="M8 3.200c3 0 5 1.600 5 4s-2 4-4.500 4c-1 0-1.500 1-3.500 1.800.6-1 1-1.800.4-2.600-1.400-.7-2.200-1.800-2.200-3.200 0-2.400 2-4 4.800-4z" fill="#f020e0"/></svg>
  <svg class="a" style="left:914px;top:7px" width="16" height="16" viewBox="0 0 16 16" ><path d="M2 3c2-2.500 5-2.500 7-.5l5 6c1.500 2 1.500 4.500 0 6-1.500 1.500-4 1.200-6-.5l-5.500-5.500c-1.500-1.500-2-3.800-.5-5.500z" fill="#fff" stroke="#101010" stroke-width="1.200"/><path d="M2 7c2-.5 5-2 6.500-5" fill="none" stroke="#303030" stroke-width=".8"/><path d="M7 7.500l1 1" stroke="#606060" stroke-width="1.200"/></svg>
  <svg class="a" style="left:932px;top:7px" width="16" height="16" viewBox="0 0 16 16" ><path d="M1 10l7-4 8 4-7 5z" fill="#e0e0e0" stroke="#303030" stroke-width=".9"/><path d="M1 10v2l8 4.500v-1.500" fill="#a0a0a0" stroke="#303030" stroke-width=".7"/><path d="M5 10l4-2.200 4 2-4 2.400z" fill="#c0a0c8"/><path d="M2 5.500l4-4v2.500l8-3 .8 2.500-8 3v2.500z" fill="#18b030" stroke="#106018" stroke-width=".8"/></svg>
  <svg class="a" style="left:950px;top:7px" width="16" height="16" viewBox="0 0 16 16" ><path d="M1.500 1v13M1.500 6.500h3M1.500 12.500h3" fill="none" stroke="#000" stroke-width="1.200" shape-rendering="crispEdges"/><rect x="3" y="1" width="8" height="2" fill="#20d040" shape-rendering="crispEdges"/><rect x="5" y="4" width="10" height="3" fill="#0a0a80" shape-rendering="crispEdges"/><rect x="4" y="8" width="11" height="3" fill="#e02020" shape-rendering="crispEdges"/><rect x="6" y="12" width="9" height="3" fill="#0a0a80" shape-rendering="crispEdges"/></svg>
  <div class="t" style="left:981px;top:9px">14:41</div>
</div>

</body>
</html>
